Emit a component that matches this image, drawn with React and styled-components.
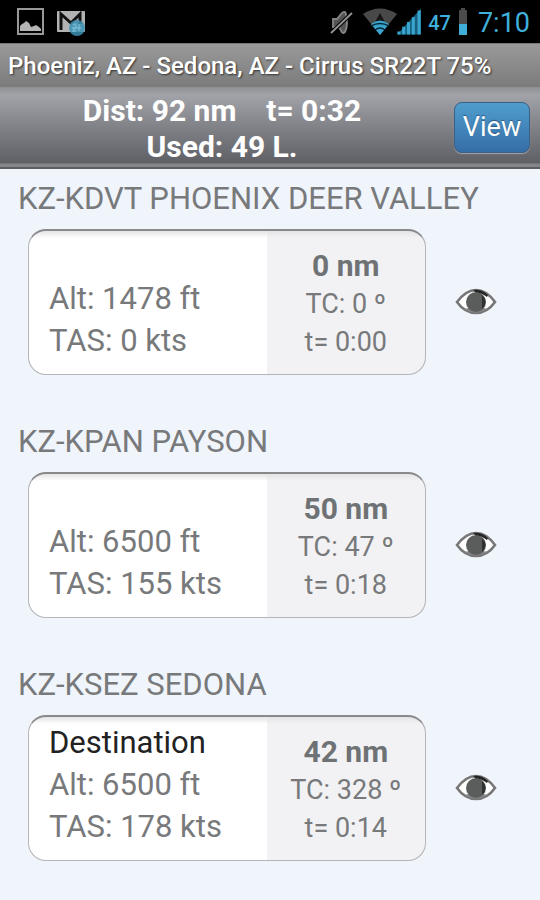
import React from "react";
import styled, { createGlobalStyle } from "styled-components";

const GlobalStyle = createGlobalStyle`
  *, *::before, *::after { box-sizing: border-box; }
  body {
    margin: 0;
    background: #f0f4fb;
    font-family: Roboto, "Liberation Sans", sans-serif;
    color: #77797b;
  }
  h1, h2, p { margin: 0; }
`;

const Screen = styled.div`
  min-height: 100vh;
`;

const StatusBar = styled.div`
  display: flex;
  align-items: center;
  justify-content: space-between;
  height: 43px;
  padding: 0 10px 0 16px;
  background: #000;
  color: #3fb0dc;
`;

const StatusGroup = styled.div`
  display: flex;
  align-items: center;
  gap: ${(p) => p.$gap}px;
`;

const Signal = styled.div`
  display: flex;
  align-items: center;
  margin-left: 2px;
`;

const BatteryLevel = styled.span`
  padding-top: 2px;
  font-size: 20px;
  font-weight: 500;
  line-height: 32px;
`;

const Clock = styled.time`
  padding-top: 2px;
  font-size: 27px;
  line-height: 32px;
  margin-left: 3px;
`;

const TitleBar = styled.header`
  height: 44px;
  padding: 0 8px;
  border-top: 1px solid #777;
  background: linear-gradient(#9b9a9b, #7b7b7b);
`;

const Title = styled.h1`
  font-size: 24px;
  line-height: 44px;
  font-weight: 500;
  color: #fff;
  white-space: nowrap;
  text-shadow: 1px 1px 2px #333;
`;

const SummaryBar = styled.section`
  display: flex;
  align-items: center;
  height: 82px;
  padding: 0 10px;
  gap: 20px;
  border-bottom: 2px solid #5c5d61;
  background: linear-gradient(#8f9093 0, #a2a3a8 8px, #85868c 45%, #5f6066 76px, #85868a 77px, #85868a 100%);
`;

const Totals = styled.div`
  flex: 1;
  padding-top: 3px;
  text-align: center;
  font-size: 30px;
  line-height: 36px;
  font-weight: 700;
  color: #fff;
`;

const TotalsLine = styled.p`
  white-space: pre;
`;

const ViewButton = styled.button`
  width: 76px;
  height: 51px;
  padding: 0;
  border: 1px solid #3a6086;
  border-radius: 8px;
  background: linear-gradient(#4f9dcd, #366ea7);
  box-shadow: 0 1px 1px #a3a5ab;
  color: #fff;
  font: 400 27px/48px Roboto, "Liberation Sans", sans-serif;
  text-shadow: 0 -1px 1px #285680;
`;

const LegList = styled.main`
  display: grid;
  gap: 52px;
  padding: 15px 15px 38px 18px;
`;

const LegName = styled.h2`
  font-size: 31px;
  line-height: 30px;
  font-weight: 400;
  white-space: nowrap;
`;

const LegRow = styled.div`
  display: flex;
  align-items: center;
  margin-top: 15px;
  padding-left: 10px;
`;

const Card = styled.div`
  flex: 1;
  display: grid;
  grid-template-columns: 3fr 2fr;
  height: 146px;
  overflow: hidden;
  border: 1px solid #b4b5b8;
  border-top: 2px solid #88898b;
  border-radius: 18px;
  background: linear-gradient(#e4e4e5, transparent 7px), linear-gradient(90deg, #fff 60%, #f2f2f4 60%);
`;

const Details = styled.div`
  display: flex;
  flex-direction: column;
  justify-content: flex-end;
  padding: 0 0 12px 20px;
  font-size: 31px;
  line-height: 42px;
`;

const Note = styled.p`
  color: #222;
`;

const Metrics = styled.div`
  display: flex;
  flex-direction: column;
  justify-content: center;
  padding-top: 2px;
  text-align: center;
  font-size: 27px;
  line-height: 38px;
`;

const Distance = styled.p`
  font-size: 30px;
  font-weight: 700;
  color: #6f7274;
`;

const EyeButton = styled.button`
  display: grid;
  place-items: center;
  width: 99px;
  height: 60px;
  padding: 0;
  border: 0;
  background: none;
`;

const legs = [
  { name: "KZ-KDVT PHOENIX DEER VALLEY", alt: "1478", tas: "0", dist: "0", tc: "0", time: "0:00" },
  { name: "KZ-KPAN PAYSON", alt: "6500", tas: "155", dist: "50", tc: "47", time: "0:18" },
  { name: "KZ-KSEZ SEDONA", note: "Destination", alt: "6500", tas: "178", dist: "42", tc: "328", time: "0:14" },
];

function PictureIcon() {
  return (
    <svg width="30" height="30" viewBox="0 0 30 30" aria-hidden="true">
      <rect x="2" y="2" width="25" height="25" fill="#000" stroke="#989898" strokeWidth="2" />
      <path d="M4 24v-5l2-2 2-1 2-2 3 2 2 4 3-1 2-1 3 2 2 2v2z" fill="#b4b4b4" />
    </svg>
  );
}

function MailIcon() {
  return (
    <svg width="30" height="30" viewBox="0 0 30 30" aria-hidden="true">
      <rect x="1" y="4" width="28" height="21" rx="1" fill="#b2b2b2" />
      <path d="M5 23V7l10 9 9-9v10" fill="none" stroke="#111" strokeWidth="3" />
      <circle cx="21" cy="21" r="8" fill="#3b92b5" fillOpacity=".85" />
      <path d="M17 18q3-2 3 1l-3 5h3M23 17v7M16 21h9" fill="none" stroke="#74bad5" strokeWidth="1.3" />
    </svg>
  );
}

function MutedIcon() {
  return (
    <svg width="24" height="26" viewBox="0 0 24 26" aria-hidden="true">
      <path d="M3 10h4l4-5c2-3 5-3 5 1 0 3 1 5 1 8s-1 10-4 10c-2 0-2-5-5-6H3z" fill="#555" stroke="#858585" strokeWidth="1.8" />
      <path d="M1 24L22 4" stroke="#000" strokeWidth="4" />
      <path d="M1 24L22 4" stroke="#949494" strokeWidth="1.8" />
    </svg>
  );
}

function WifiIcon() {
  return (
    <svg width="34" height="27" viewBox="0 0 34 27" aria-hidden="true">
      <path d="M0 6Q17-5 34 6L17 27z" fill="#484848" />
      <path d="M17 5l6 11H11z" fill="#161616" />
      <path d="M8 16q9-7 18 0l-9 11z" fill="#39a5ce" />
      <path d="M8 18q9-5 18 0M12 22q5-4 10 0" fill="none" stroke="#08293a" strokeWidth="1.6" />
    </svg>
  );
}

function BarsIcon() {
  return (
    <svg width="24" height="27" viewBox="0 0 25 27" aria-hidden="true">
      <path d="M0 27L25 0v27z" fill="#17617e" />
      <path d="M2 27v-3M7 27v-8M12 27V14M17 27V9M23 27V2" stroke="#3aa5cf" strokeWidth="3.2" />
    </svg>
  );
}

function BatteryIcon() {
  return (
    <svg width="10" height="27" viewBox="0 0 10 27" aria-hidden="true">
      <rect x="3" y="0" width="4" height="4" fill="#4b4b4b" />
      <rect x="1" y="2" width="8" height="25" rx="1" fill="#4b4b4b" />
      <path d="M1 16h8v11H1z" fill="#40afd8" />
    </svg>
  );
}

function EyeIcon() {
  return (
    <svg width="42" height="28" viewBox="0 0 42 28" aria-hidden="true">
      <path d="M2 14C8 6 14 2 21 2s14 5 19 12c-5 7-12 11-19 11S7 21 2 14z" fill="#fff" stroke="#777" strokeWidth="2.6" />
      <path d="M9 21q12 7 24 0l-5-1q-7 3-14 0z" fill="#858585" />
      <circle cx="21" cy="14" r="10" fill="#5b5d5c" />
      <path d="M18 2Q27 1 33 7l-1 2q-5-4-12-5z" fill="#252525" />
      <path d="M27 7q7 7 0 14z" fill="#303131" />
    </svg>
  );
}

function Leg({ leg }) {
  return (
    <section>
      <LegName>{leg.name}</LegName>
      <LegRow>
        <Card>
          <Details>
            {leg.note && <Note>{leg.note}</Note>}
            <p>Alt: {leg.alt} ft</p>
            <p>TAS: {leg.tas} kts</p>
          </Details>
          <Metrics>
            <Distance>{leg.dist} nm</Distance>
            <p>TC: {leg.tc} º</p>
            <p>t= {leg.time}</p>
          </Metrics>
        </Card>
        <EyeButton type="button" aria-label={`Show ${leg.name}`}>
          <EyeIcon />
        </EyeButton>
      </LegRow>
    </section>
  );
}

export default function App() {
  return (
    <Screen>
      <GlobalStyle />
      <StatusBar>
        <StatusGroup $gap={10}>
          <PictureIcon />
          <MailIcon />
        </StatusGroup>
        <StatusGroup $gap={7}>
          <MutedIcon />
          <Signal>
            <WifiIcon />
            <BarsIcon />
          </Signal>
          <BatteryLevel>47</BatteryLevel>
          <BatteryIcon />
          <Clock>7:10</Clock>
        </StatusGroup>
      </StatusBar>
      <TitleBar>
        <Title>Phoeniz, AZ - Sedona, AZ - Cirrus SR22T 75%</Title>
      </TitleBar>
      <SummaryBar>
        <Totals>
          <TotalsLine>{"Dist: 92 nm    t= 0:32"}</TotalsLine>
          <TotalsLine>Used: 49 L.</TotalsLine>
        </Totals>
        <ViewButton type="button">View</ViewButton>
      </SummaryBar>
      <LegList>
        {legs.map((leg) => (
          <Leg key={leg.name} leg={leg} />
        ))}
      </LegList>
    </Screen>
  );
}
